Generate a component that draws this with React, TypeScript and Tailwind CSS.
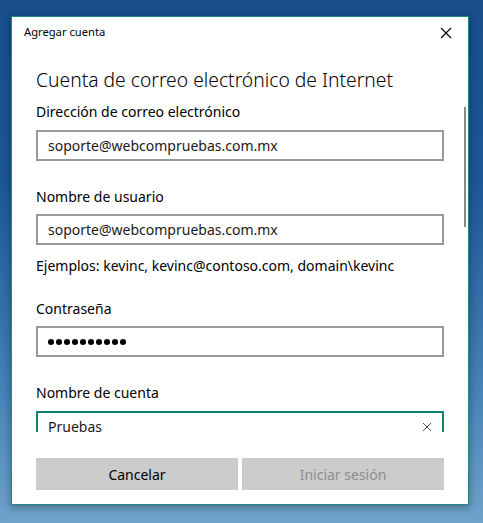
import React from 'react';

const font = { fontFamily: '"Segoe UI", "Noto Sans", "Open Sans", sans-serif' };

function Field({ value, className = '' }: { value: string; className?: string }) {
  return (
    <div className={`h-[31px] border-2 border-[#999999] flex items-center pl-[10px] text-[14px] text-[#1a1a1a] ${className}`}>
      {value}
    </div>
  );
}

export default function App() {
  return (
    <div
      className="w-[483px] h-[523px] overflow-hidden bg-[linear-gradient(180deg,#174d8a_0%,#1d5796_35%,#3f7db3_70%,#6fa2cb_100%)] pt-[16px] pl-[11px]"
      style={font}
    >
      <div className="w-[458px] h-[489px] bg-white border border-[#1b8b80] flex flex-col shadow-[0_2px_8px_rgba(0,0,0,0.35)]">
        <div className="h-[30px] flex items-center justify-between pl-[12px] pr-[16px] shrink-0">
          <span className="text-[11.2px] text-black">Agregar cuenta</span>
          <svg width="12" height="12" viewBox="0 0 12 12" className="mt-[2px]">
            <path d="M1 1 L11 11 M11 1 L1 11" stroke="#000" strokeWidth="1.1" />
          </svg>
        </div>

        <div className="relative h-[385px] overflow-hidden shrink-0">
          <div className="pl-[24px] pr-[24px]">
            <div className="mt-[19px] h-[28px] leading-[28px] text-[19.3px] font-light text-black">
              Cuenta de correo electrónico de Internet
            </div>
            <div className="mt-[8px] h-[20px] leading-[20px] text-[14px] text-black">Dirección de correo electrónico</div>
            <Field value="soporte@webcompruebas.com.mx" className="mt-[8px]" />
            <div className="mt-[26px] h-[20px] leading-[20px] text-[14px] text-black">Nombre de usuario</div>
            <Field value="soporte@webcompruebas.com.mx" className="mt-[7px]" />
            <div className="mt-[11px] h-[20px] leading-[20px] text-[14px] text-black">
              Ejemplos: kevinc, kevinc@contoso.com, domain\kevinc
            </div>
            <div className="mt-[23px] h-[20px] leading-[20px] text-[14px] text-black">Contraseña</div>
            <div className="mt-[7px] h-[31px] border-2 border-[#999999] flex items-center pl-[10px] gap-[2px]">
              {Array.from({ length: 10 }).map((_, i) => (
                <span key={i} className="w-[6px] h-[6px] rounded-full bg-black" />
              ))}
            </div>
            <div className="mt-[26px] h-[20px] leading-[20px] text-[14px] text-black">Nombre de cuenta</div>
            <div className="mt-[8px] h-[31px] border-2 border-[#0e8174] flex items-center justify-between pl-[10px] pr-[10px] text-[14px] text-[#1a1a1a]">
              <span className="leading-[11px]">Pruebas</span>
              <svg width="10" height="10" viewBox="0 0 10 10">
                <path d="M1 1 L9 9 M9 1 L1 9" stroke="#555" strokeWidth="1" />
              </svg>
            </div>
          </div>
          <div className="absolute right-[2px] top-[60px] w-[2px] h-[120px] bg-[#8a8a8a]" />
        </div>

        <div className="flex gap-[4px] pl-[24px] pr-[24px] mt-[26px]">
          <button className="w-[202px] h-[32px] bg-[#cccccc] text-[14px] text-black">Cancelar</button>
          <button className="w-[202px] h-[32px] bg-[#cccccc] text-[14px] text-[#8c8c8c]">Iniciar sesión</button>
        </div>
      </div>
    </div>
  );
}
